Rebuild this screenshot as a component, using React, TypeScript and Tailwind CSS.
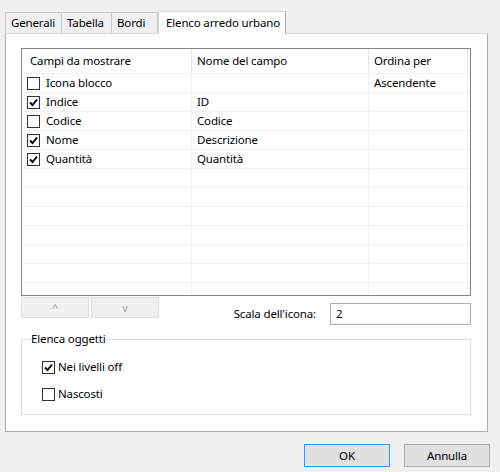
import React from 'react';

const Check: React.FC<{ checked?: boolean }> = ({ checked }) => (
  <span className="w-[13px] h-[13px] border border-[#333333] bg-white flex items-center justify-center shrink-0">
    {checked && (
      <svg width="9" height="9" viewBox="0 0 9 9">
        <path d="M1 4.5 L3.5 7 L8 1.5" fill="none" stroke="#000" strokeWidth="1.9" />
      </svg>
    )}
  </span>
);

const rows = [
  { checked: false, label: 'Icona blocco', name: '', order: 'Ascendente' },
  { checked: true, label: 'Indice', name: 'ID', order: '' },
  { checked: false, label: 'Codice', name: 'Codice', order: '' },
  { checked: true, label: 'Nome', name: 'Descrizione', order: '' },
  { checked: true, label: 'Quantità', name: 'Quantità', order: '' },
];

const App: React.FC = () => {
  const filled = [...rows, ...Array.from({ length: 7 }, () => null)];

  return (
    <div
      className="w-[500px] h-[472px] bg-[#f0f0f0] text-[11.5px] leading-[16px] tracking-[-0.15px] text-black flex flex-col whitespace-nowrap"
      style={{ fontFamily: '"Noto Sans", sans-serif' }}
    >
      {/* tab strip */}
      <div className="flex items-end pl-[5px] pt-[10px] h-[33px] relative z-10">
        <div className="h-[21px] px-[5px] flex items-center border border-b-0 border-[#cccccc] bg-[#f0f0f0] w-[57px]">Generali</div>
        <div className="h-[21px] px-[5px] flex items-center border border-b-0 border-l-0 border-[#cccccc] bg-[#f0f0f0] w-[50px]">Tabella</div>
        <div className="h-[21px] px-[5px] flex items-center border border-b-0 border-l-0 border-[#cccccc] bg-[#f0f0f0] w-[46px]">Bordi</div>
        <div className="h-[23px] px-[7px] flex items-center border border-b-0 border-[#adadad] border-l-[#d9d9d9] border-t-[#d9d9d9] bg-white w-[128px] mb-[-1px]">Elenco arredo urbano</div>
      </div>

      {/* panel */}
      <div className="ml-[5px] w-[483px] h-[399px] border border-[#adadad] border-t-[#d9d9d9] bg-white pl-[15px] pt-[14px]">
        {/* list view */}
        <div className="w-[450px] h-[248px] border border-[#828790] flex flex-col overflow-hidden">
          <div className="flex h-[25px] shrink-0 border-b border-[#f0f0f0]">
            <div className="w-[170px] border-r border-[#e5e5e5] pl-[8px] flex items-center">Campi da mostrare</div>
            <div className="w-[177px] border-r border-[#e5e5e5] pl-[5px] flex items-center">Nome del campo</div>
            <div className="w-[99px] border-r border-[#e5e5e5] pl-[5px] flex items-center">Ordina per</div>
          </div>
          {filled.map((r, i) => (
            <div key={i} className="flex h-[19px] shrink-0 border-b border-[#f0f0f0]">
              <div className="w-[170px] border-r border-[#f0f0f0] pl-[5px] flex items-center gap-[6px]">
                {r && <Check checked={r.checked} />}
                {r && <span>{r.label}</span>}
              </div>
              <div className="w-[177px] border-r border-[#f0f0f0] pl-[5px] flex items-center">{r?.name}</div>
              <div className="w-[99px] border-r border-[#f0f0f0] pl-[5px] flex items-center">{r?.order}</div>
            </div>
          ))}
        </div>

        {/* move buttons + scale */}
        <div className="flex mt-[1px] w-[450px]">
          <button className="w-[68px] h-[21px] bg-[#f0f0f0] border border-[#dedede] text-[#a0a0a0] text-[11px] flex items-center justify-center">^</button>
          <button className="w-[68px] h-[21px] ml-[2px] bg-[#f0f0f0] border border-[#dedede] text-[#a0a0a0] text-[11px] flex items-center justify-center">v</button>
          <span className="ml-auto mt-[9px]">Scala dell'icona:</span>
          <div className="ml-[14px] mt-[6px] w-[141px] h-[22px] border border-[#abadb3] flex items-center pl-[5px]">2</div>
        </div>

        {/* group box */}
        <div className="relative mt-[14px] w-[450px] h-[76px] border border-[#dcdcdc]">
          <span className="absolute left-[8px] top-[-9px] bg-white px-[1px]">Elenca oggetti</span>
          <div className="flex items-center gap-[3px] ml-[20px] mt-[19px] h-[16px]">
            <Check checked />
            <span>Nei livelli off</span>
          </div>
          <div className="flex items-center gap-[3px] ml-[20px] mt-[11px] h-[16px]">
            <Check />
            <span>Nascosti</span>
          </div>
        </div>
      </div>

      {/* dialog buttons */}
      <div className="flex mt-[12px] ml-[304px] gap-[14px]">
        <button className="w-[86px] h-[23px] bg-[#e1e1e1] border border-[#3399ff] flex items-center justify-center">OK</button>
        <button className="w-[86px] h-[23px] bg-[#e1e1e1] border border-[#adadad] flex items-center justify-center">Annulla</button>
      </div>
    </div>
  );
};

export default App;
